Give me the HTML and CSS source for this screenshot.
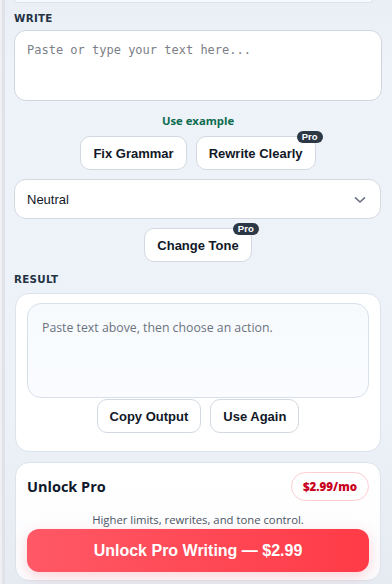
FILE: index.html
```html
<!DOCTYPE html>
<html lang="en">
<head>
<meta charset="utf-8">
<title>Writer</title>
<link rel="stylesheet" href="styles.css">
</head>
<body>
<div class="edge"></div>
<main class="panel">
  <div class="prev-card"></div>
  <div class="label label-write">WRITE</div>
  <div class="input-box">Paste or type your text here...</div>
  <div class="example">Use example</div>
  <div class="btn-row row-actions">
    <button class="btn">Fix Grammar</button>
    <button class="btn has-badge">Rewrite Clearly<span class="pro">Pro</span></button>
  </div>
  <div class="select">
    <span>Neutral</span>
    <svg class="chev" width="12" height="8" viewBox="0 0 12 8"><path d="M1.5 1.8 6 6 10.5 1.8" fill="none" stroke="#6b7280" stroke-width="1.6" stroke-linecap="round" stroke-linejoin="round"/></svg>
  </div>
  <div class="btn-row row-tone">
    <button class="btn has-badge">Change Tone<span class="pro">Pro</span></button>
  </div>
  <div class="label label-result">RESULT</div>
  <section class="card result-card">
    <div class="output">Paste text above, then choose an action.</div>
    <div class="btn-row row-output">
      <button class="btn">Copy Output</button>
      <button class="btn">Use Again</button>
    </div>
  </section>
  <section class="card pro-card">
    <div class="pro-head">
      <h2 class="pro-title">Unlock Pro</h2>
      <span class="price">$2.99/mo</span>
    </div>
    <p class="pro-sub">Higher limits, rewrites, and tone control.</p>
    <button class="cta">Unlock Pro Writing — $2.99</button>
  </section>
</main>
</body>
</html>
```
FILE: styles.css
```css
* { box-sizing: border-box; }
html, body { margin: 0; padding: 0; }
body {
  width: 392px;
  height: 584px;
  overflow: hidden;
  background: linear-gradient(180deg, #eaeff5 0%, #eef3f9 12%, #edf2f8 70%, #e6ebf2 100%);
  font-family: "Liberation Sans", Arial, sans-serif;
  color: #111827;
  position: relative;
}
.edge {
  position: absolute;
  left: 0; top: 0; bottom: 0;
  width: 5px;
  background: linear-gradient(90deg, #eef0f3 0 2px, #dfe3e9 2px 5px);
}
.panel {
  padding: 0 10px 0 14px;
  display: flex;
  flex-direction: column;
}
.prev-card {
  height: 3px;
  margin-right: 9px;
  background: #f7f9fc;
  border: 1px solid #dbe3ec;
  border-top: none;
  border-radius: 0 0 10px 10px;
}
.label {
  font-family: "DejaVu Sans", Verdana, sans-serif;
  font-weight: 700;
  font-size: 10.3px;
  letter-spacing: 0.3px;
  color: #243244;
  line-height: 12px;
}
.label-write { margin-top: 9px; margin-bottom: 6px; }
.input-box {
  height: 71px;
  background: #fff;
  border: 1px solid #cfd6df;
  border-radius: 12px;
  padding: 11px 12px;
  font-family: "DejaVu Sans Mono", "Liberation Mono", monospace;
  font-size: 12px;
  line-height: 16px;
  color: #7b8088;
}
.example {
  text-align: center;
  font-family: "Open Sans", sans-serif;
  font-weight: 700;
  font-size: 11.3px;
  line-height: 16px;
  color: #0b6b4e;
  margin-top: 12px;
}
.btn-row {
  display: flex;
  justify-content: center;
  gap: 9px;
}
.row-actions { margin-top: 7px; }
.btn {
  position: relative;
  height: 34px;
  padding: 0 12px;
  background: #fff;
  border: 1px solid #d3d9e1;
  border-radius: 10px;
  font-family: "Liberation Sans", Arial, sans-serif;
  font-weight: 700;
  font-size: 13px;
  color: #111827;
}
.pro {
  position: absolute;
  top: -6px;
  right: -8px;
  height: 12px;
  padding: 0 5px;
  border-radius: 6px;
  background: #2d3846;
  color: #fff;
  font-family: "Liberation Sans", Arial, sans-serif;
  font-weight: 700;
  font-size: 9.5px;
  line-height: 12px;
}
.select {
  margin-top: 9px;
  height: 40px;
  margin-right: 1px;
  background: #fff;
  border: 1px solid #d3d9e1;
  border-radius: 12px;
  display: flex;
  align-items: center;
  justify-content: space-between;
  padding: 0 14px 0 12px;
  font-size: 13px;
  color: #111827;
}
.chev { margin-top: 2px; }
.row-tone { margin-top: 9px; }
.label-result { margin-top: 11px; margin-bottom: 8px; }
.card {
  margin-left: 1px;
  margin-right: 1px;
  background: #fff;
  border: 1px solid #dbe3ec;
  border-radius: 14px;
}
.result-card {
  padding: 9px 11px 18px;
}
.output {
  height: 95px;
  background: linear-gradient(180deg, #f7fafd, #fafcff);
  border: 1px solid #d8e1eb;
  border-radius: 14px;
  padding: 15px 14px;
  font-family: "Open Sans", sans-serif;
  font-size: 12.3px;
  line-height: 18px;
  color: #6b7280;
}
.row-output { margin-top: 1px; }
.pro-card {
  margin-top: 10px;
  padding: 9px 11px 10px;
  background: linear-gradient(180deg, #ffffff, #fbfcfe);
  height: 119px;
}
.pro-head {
  display: flex;
  align-items: center;
  justify-content: space-between;
  height: 29px;
}
.pro-title {
  margin: 0;
  font-family: "Open Sans", sans-serif;
  font-weight: 700;
  font-size: 14.5px;
  color: #0f172a;
}
.price {
  height: 29px;
  padding: 0 11px;
  border: 1px solid #fecdd3;
  border-radius: 15px;
  display: flex;
  align-items: center;
  font-family: "Open Sans", sans-serif;
  font-weight: 800;
  font-size: 11.5px;
  color: #c8001e;
  background: #fff;
}
.pro-sub {
  margin: 10px 0 0;
  text-align: center;
  font-family: "Open Sans", sans-serif;
  font-size: 11.3px;
  line-height: 18px;
  color: #4b5563;
}
.cta {
  display: block;
  width: 100%;
  height: 43px;
  border: none;
  border-radius: 12px;
  background: linear-gradient(90deg, #ff5866, #ff3b47);
  box-shadow: 0 4px 14px rgba(255, 70, 85, 0.22);
  color: #fff;
  font-family: "Liberation Sans", Arial, sans-serif;
  font-weight: 700;
  font-size: 16px;
}
```
